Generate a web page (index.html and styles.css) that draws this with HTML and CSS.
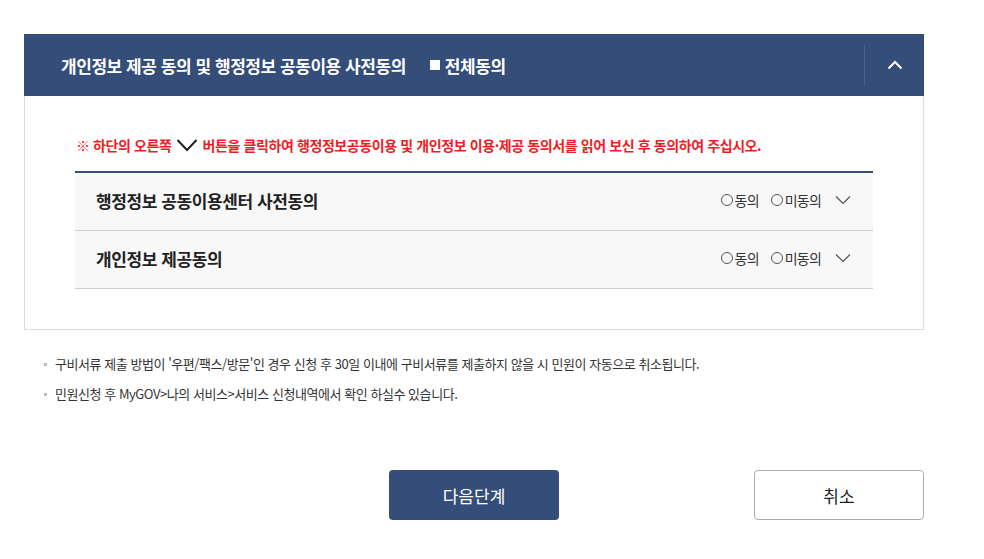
FILE: index.html
```html
<!DOCTYPE html>
<html lang="ko">
<head>
<meta charset="utf-8">
<link rel="stylesheet" href="styles.css">
</head>
<body>
<div class="page">
  <section class="panel">
    <header class="panel-head">
      <h2 class="panel-title">개인정보 제공 동의 및 행정정보 공동이용 사전동의</h2>
      <span class="all-agree"><span class="sq"></span>전체동의</span>
      <span class="head-spacer"></span>
      <button class="toggle" type="button" aria-label="접기">
        <svg width="16" height="10" viewBox="0 0 16 10"><path d="M1.5 8.5 L8 2 L14.5 8.5" fill="none" stroke="#fff" stroke-width="2"/></svg>
      </button>
    </header>
    <div class="panel-body">
      <p class="notice">※ 하단의 오른쪽 <svg class="nchev" width="22" height="14" viewBox="0 0 22 14"><path d="M1.5 2 L11 12 L20.5 2" fill="none" stroke="#222" stroke-width="2"/></svg> 버튼을 클릭하여 행정정보공동이용 및 개인정보 이용·제공 동의서를 읽어 보신 후 동의하여 주십시오.</p>
      <ul class="agree-list">
        <li class="agree-row">
          <span class="row-title">행정정보 공동이용센터 사전동의</span>
          <span class="opts">
            <span class="opt"><span class="circle"></span>동의</span>
            <span class="opt"><span class="circle"></span>미동의</span>
            <svg class="rchev" width="16" height="10" viewBox="0 0 16 10"><path d="M1 1.5 L8 8.5 L15 1.5" fill="none" stroke="#555" stroke-width="1.2"/></svg>
          </span>
        </li>
        <li class="agree-row">
          <span class="row-title">개인정보 제공동의</span>
          <span class="opts">
            <span class="opt"><span class="circle"></span>동의</span>
            <span class="opt"><span class="circle"></span>미동의</span>
            <svg class="rchev" width="16" height="10" viewBox="0 0 16 10"><path d="M1 1.5 L8 8.5 L15 1.5" fill="none" stroke="#555" stroke-width="1.2"/></svg>
          </span>
        </li>
      </ul>
    </div>
  </section>
  <ul class="notes">
    <li>구비서류 제출 방법이 '우편/팩스/방문'인 경우 신청 후 30일 이내에 구비서류를 제출하지 않을 시 민원이 자동으로 취소됩니다.</li>
    <li>민원신청 후 MyGOV&gt;나의 서비스&gt;서비스 신청내역에서 확인 하실수 있습니다.</li>
  </ul>
  <div class="actions">
    <button class="btn btn-primary" type="button">다음단계</button>
    <button class="btn btn-cancel" type="button">취소</button>
  </div>
</div>
</body>
</html>
```

FILE: styles.css
```css
* { box-sizing: border-box; }
html, body { margin: 0; padding: 0; background: #fff; }
body {
  font-family: "Noto Sans CJK KR", "Noto Sans", sans-serif;
  color: #222;
}
.page {
  width: 900px;
  margin-left: 24px;
  padding-top: 34px;
}
.panel {
  border: 1px solid #dcdcdc;
  border-top: none;
}
.panel-head {
  display: flex;
  align-items: center;
  height: 62px;
  background: #344d79;
  margin: 0 -1px;
  padding-left: 37px;
}
.panel-title {
  margin: 0;
  font-size: 17px;
  font-weight: 700;
  color: #fff;
  letter-spacing: -0.45px;
}
.all-agree {
  display: flex;
  align-items: center;
  margin-left: 24px;
  font-size: 17px;
  font-weight: 700;
  color: #fff;
  letter-spacing: -0.45px;
}
.sq {
  width: 10px;
  height: 10px;
  background: #fff;
  margin-right: 5px;
}
.head-spacer { flex: 1; }
.toggle {
  width: 60px;
  height: 40px;
  border: none;
  border-left: 1px solid #4b6391;
  background: transparent;
  display: flex;
  align-items: center;
  justify-content: center;
  padding: 0;
}
.panel-body {
  padding: 38px 50px 40px 50px;
}
.notice {
  margin: 0 0 15px 1px;
  color: #ee1c25;
  font-size: 14px;
  font-weight: 700;
  letter-spacing: -0.4px;
  line-height: 22px;
  display: flex;
  align-items: center;
  white-space: nowrap;
}
.nchev { margin: 0 5px 0 4px; }
.agree-list {
  list-style: none;
  margin: 0;
  padding: 0;
  border-top: 2px solid #344d79;
}
.agree-row {
  display: flex;
  align-items: center;
  justify-content: space-between;
  height: 58px;
  background: #f8f8f8;
  border-bottom: 1px solid #cccccc;
  padding: 0 22px 0 21px;
}
.row-title {
  font-size: 17px;
  font-weight: 700;
  letter-spacing: -0.4px;
  color: #222;
  position: relative;
  top: -1px;
}
.opts {
  display: flex;
  align-items: center;
  font-size: 14px;
  color: #333;
  letter-spacing: -0.8px;
  position: relative;
  top: -2px;
}
.opt {
  display: flex;
  align-items: center;
  margin-right: 12px;
}
.circle {
  width: 12px;
  height: 12px;
  border: 1px solid #555;
  border-radius: 50%;
  margin-right: 2px;
}
.rchev { margin-left: 2px; }
.notes {
  list-style: none;
  margin: 19px 0 0 0;
  padding: 0 0 0 20px;
}
.notes li {
  position: relative;
  padding-left: 11px;
  font-size: 13px;
  line-height: 30px;
  letter-spacing: -0.45px;
  color: #333;
}
.notes li::before {
  content: "";
  position: absolute;
  left: 0;
  top: 14px;
  width: 3px;
  height: 3px;
  background: #bbb;
}
.actions {
  display: flex;
  justify-content: space-between;
  margin-top: 61px;
  padding-left: 365px;
}
.btn {
  width: 170px;
  height: 50px;
  border-radius: 4px;
  font-family: "Noto Sans CJK KR", "Noto Sans", sans-serif;
  font-size: 17px;
  cursor: pointer;
}
.btn-primary {
  background: #344d79;
  border: none;
  color: #fff;
}
.btn-cancel {
  background: #fff;
  border: 1px solid #aaaaaa;
  color: #222;
}
```
